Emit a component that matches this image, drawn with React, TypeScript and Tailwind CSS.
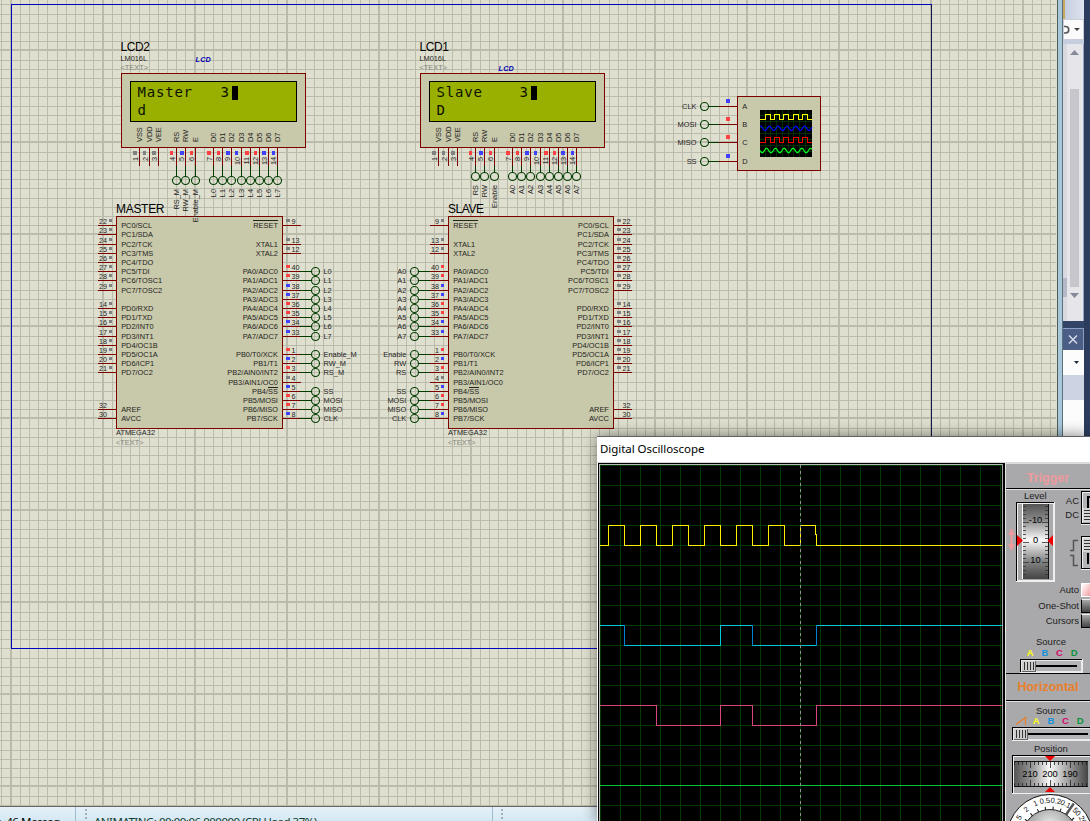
import React from "react";

const MAROON = "#7d0000";
const GREEN = "#003c00";
const BODY = "#c8c8aa";
const INK = "#24241e";
const LEVEL: Record<string, string> = { r: "#ff4040", b: "#4040ff", g: "#808080" };
const SANS = "'Liberation Sans', Arial, sans-serif";

type Anchor = "start" | "middle" | "end";

function Label({ x, y, size = 7.4, anchor = "start", fill = INK, width, children }: {
  x: number; y: number; size?: number; anchor?: Anchor; fill?: string; width?: number; children: string;
}) {
  return (
    <text x={x} y={y} fontFamily={SANS} fontSize={size} textAnchor={anchor} fill={fill} textLength={width}>
      {children}
    </text>
  );
}

function VLabel({ x, y, anchor = "start", children }: { x: number; y: number; anchor?: Anchor; children: string }) {
  return (
    <text transform={`translate(${x} ${y}) rotate(-90)`} fontFamily={SANS} fontSize={7.4} textAnchor={anchor} fill={INK}>
      {children}
    </text>
  );
}

const H = ({ x, y, w, c }: { x: number; y: number; w: number; c: string }) => (
  <rect x={x} y={y} width={w} height={1} fill={c} shapeRendering="crispEdges" />
);
const V = ({ x, y, h, c }: { x: number; y: number; h: number; c: string }) => (
  <rect x={x} y={y} width={1} height={h} fill={c} shapeRendering="crispEdges" />
);
const Terminal = ({ x, y }: { x: number; y: number }) => (
  <circle cx={x + 0.5} cy={y + 0.5} r={4} fill="none" stroke={GREEN} strokeWidth={1.1} />
);
const Box = ({ x, y, w, h, fill = BODY, stroke = MAROON }: { x: number; y: number; w: number; h: number; fill?: string; stroke?: string }) => (
  <rect x={x + 0.5} y={y + 0.5} width={w} height={h} fill={fill} stroke={stroke} shapeRendering="crispEdges" />
);
const Dot = ({ x, y, s, w = 4, h = 4 }: { x: number; y: number; s: string; w?: number; h?: number }) => (
  <rect x={x} y={y} width={w} height={h} fill={LEVEL[s]} shapeRendering="crispEdges" />
);

type Pin = [number, string, string, string, string?];

const PORT_CD: Pin[] = [
  [225, "22", "PC0/SCL", "g"], [234, "23", "PC1/SDA", "g"], [244, "24", "PC2/TCK", "g"], [253, "25", "PC3/TMS", "g"],
  [262, "26", "PC4/TDO", "g"], [271, "27", "PC5/TDI", "g"], [280, "28", "PC6/TOSC1", "g"], [290, "29", "PC7/TOSC2", "g"],
  [308, "14", "PD0/RXD", "g"], [317, "15", "PD1/TXD", "g"], [326, "16", "PD2/INT0", "g"], [336, "17", "PD3/INT1", "g"],
  [345, "18", "PD4/OC1B", "g"], [354, "19", "PD5/OC1A", "g"], [363, "20", "PD6/ICP1", "g"], [372, "21", "PD7/OC2", "g"],
  [409, "32", "AREF", ""], [418, "30", "AVCC", ""],
];

const portAB = (nets: string[]): Pin[] => [
  [225, "9", "RESET", "g"], [244, "13", "XTAL1", "g"], [253, "12", "XTAL2", "g"],
  [271, "40", "PA0/ADC0", "r", nets[0]], [280, "39", "PA1/ADC1", "r", nets[1]], [290, "38", "PA2/ADC2", "b", nets[2]],
  [299, "37", "PA3/ADC3", "b", nets[3]], [308, "36", "PA4/ADC4", "r", nets[4]], [317, "35", "PA5/ADC5", "r", nets[5]],
  [326, "34", "PA6/ADC6", "b", nets[6]], [336, "33", "PA7/ADC7", "b", nets[7]],
  [354, "1", "PB0/T0/XCK", "r", nets[8]], [363, "2", "PB1/T1", "b", nets[9]], [372, "3", "PB2/AIN0/INT2", "r", nets[10]],
  [382, "4", "PB3/AIN1/OC0", "g"], [391, "5", "PB4/SS", "b", "SS"], [400, "6", "PB5/MOSI", "r", "MOSI"],
  [409, "7", "PB6/MISO", "r", "MISO"], [418, "8", "PB7/SCK", "b", "CLK"],
];

function PinRow({ pin, edge, side }: { pin: Pin; edge: number; side: "left" | "right" }) {
  const [y, num, name, s, net] = pin;
  const left = side === "left";
  return (
    <g>
      <H x={left ? edge - 18 : edge + 1} y={y} w={18} c={MAROON} />
      {s && <Dot x={left ? edge - 7 : edge + 4} y={y - 6} s={s} w={left ? 3 : 4} h={3} />}
      <Label x={left ? edge - 9 : edge + 9.4} y={y - 1.3} size={7.2} anchor={left ? "end" : "start"}>{num}</Label>
      <Label x={left ? edge + 5.2 : edge - 4.1} y={y + 3} anchor={left ? "start" : "end"}>{name}</Label>
      {name === "RESET" && <H x={left ? edge + 5 : edge - 29} y={y - 5} w={25} c={INK} />}
      {name === "PB4/SS" && <H x={left ? edge + 21 : edge - 14} y={y - 4} w={10} c={INK} />}
      {net && (
        <>
          <H x={left ? edge - 29 : edge + 18} y={y} w={11} c={GREEN} />
          <Terminal x={left ? edge - 34 : edge + 33} y={y} />
          <Label x={left ? edge - 41.7 : edge + 41.5} y={y + 3} anchor={left ? "end" : "start"}>{net}</Label>
        </>
      )}
    </g>
  );
}

function Mcu({ x, w, name, nameWidth, nets, mirrored }: { x: number; w: number; name: string; nameWidth: number; nets: string[]; mirrored?: boolean }) {
  const cd = mirrored ? "right" : "left";
  const ab = mirrored ? "left" : "right";
  return (
    <g>
      <Box x={x} y={216} w={w} h={212} />
      <Label x={x} y={213} size={12} fill="#000" width={nameWidth}>{name}</Label>
      {PORT_CD.map((p) => <PinRow key={p[1]} pin={p} edge={mirrored ? x + w : x} side={cd} />)}
      {portAB(nets).map((p) => <PinRow key={p[1]} pin={p} edge={mirrored ? x : x + w} side={ab} />)}
      <Label x={x} y={435} width={39}>ATMEGA32</Label>
      <Label x={x} y={444.6} fill="#84847a" width={27.5}>{"<TEXT>"}</Label>
    </g>
  );
}

const LCD_PINS: [number, string, string][] = [
  [18, "VSS", "g"], [28, "VDD", "g"], [37, "VEE", "g"], [55, "RS", "r"], [64, "RW", "b"], [74, "E", "r"],
  [92, "D0", "r"], [101, "D1", "r"], [110, "D2", "b"], [120, "D3", "b"], [129, "D4", "r"], [138, "D5", "r"], [147, "D6", "b"], [156, "D7", "b"],
];

function Lcd({ x, name, tagX, tagY, line1, line2, circleY }: {
  x: number; name: string; tagX: number; tagY: number; line1: string; line2: string; circleY: number;
}) {
  const cells = (n: number) => Array.from({ length: n }, (_, i) => (x + 16.6 + i * 9.2).toFixed(1)).join(" ");
  const lcdFont = "'DejaVu Sans Mono', monospace";
  return (
    <g>
      <Label x={x - 0.5} y={50.8} size={12} fill="#000" width={29.5}>{name}</Label>
      <Label x={x - 0.5} y={60.8} width={26.5}>LM016L</Label>
      <Label x={x - 0.5} y={69.6} fill="#84847a" width={27.5}>{"<TEXT>"}</Label>
      <text x={tagX} y={tagY} fontFamily={SANS} fontSize={7.2} fontWeight={700} fontStyle="italic" fill="#0000b4" textLength={15.3}>LCD</text>
      <Box x={x} y={73} w={184} h={74} />
      <Box x={x + 9} y={81} w={166} h={40} fill="#99b000" stroke="#000" />
      <text x={cells(line1.length)} y={97} fontFamily={lcdFont} fontSize={14} fill="#0c1000" xmlSpace="preserve">{line1}</text>
      <text x={cells(1)} y={115} fontFamily={lcdFont} fontSize={14} fill="#0c1000">{line2}</text>
      <rect x={x + 111} y={86} width={6} height={14} fill="#000" shapeRendering="crispEdges" />
      {LCD_PINS.map(([dx, pn, s], i) => {
        const px = x + dx;
        return (
          <g key={pn}>
            <V x={px} y={148} h={18} c={MAROON} />
            <Dot x={px - (i > 2 && i % 3 ? 5 : 6)} y={151} s={s} w={i % 2 ? 3 : 4} />
            <VLabel x={px - 0.8} y={156.8} anchor="end">{String(i + 1)}</VLabel>
            <VLabel x={px + 3.3} y={142}>{pn}</VLabel>
            {i > 2 && (
              <>
                <V x={px} y={166} h={circleY - 170} c={GREEN} />
                <Terminal x={px} y={circleY} />
              </>
            )}
          </g>
        );
      })}
    </g>
  );
}

function LcdNets({ x, circleY, nets }: { x: number; circleY: number; nets: string[] }) {
  return (
    <g>
      {nets.map((net, i) => (
        <VLabel key={net} x={x + LCD_PINS[i + 3][0] + 2.8} y={circleY + 9} anchor="end">{net}</VLabel>
      ))}
    </g>
  );
}

function ScopePart() {
  const rows: [number, string, string, string][] = [[106, "CLK", "A", "b"], [124, "MOSI", "B", "r"], [142, "MISO", "C", "r"], [161, "SS", "D", "b"]];
  const square = (lo: number, hi: number) => {
    let d = `M760 ${lo}.5`;
    [765.5, 774.5, 783.5, 793.5, 802.5].forEach((u) => { d += `H${u}V${hi}.5H${u + 5}V${lo}.5`; });
    return d + "H812";
  };
  const wave = (y: number, off: number) =>
    "M" + Array.from({ length: 53 }, (_, i) => `${760 + i} ${(y + 2.3 * Math.sin(((i + off) / 8.8) * 2 * Math.PI)).toFixed(1)}`).join("L");
  return (
    <g>
      <Box x={737} y={96} w={83} h={74} />
      {rows.map(([y, net, port, s]) => (
        <g key={net}>
          <Label x={696.5} y={y + 3} anchor="end">{net}</Label>
          <Terminal x={704} y={y} />
          <H x={709} y={y} w={10} c={GREEN} />
          <H x={719} y={y} w={18} c={MAROON} />
          <Dot x={726} y={y - 7} s={s} />
          <Label x={742.3} y={y + 3}>{port}</Label>
        </g>
      ))}
      <rect x={760} y={110} width={52} height={47} fill="#000" />
      <path d="M765.5 110V157M770.5 110V157M776.5 110V157M782.5 110V157M788.5 110V157M793.5 110V157M799.5 110V157M805.5 110V157M760 115.5H812M760 121.5H812M760 127.5H812M760 133.5H812M760 139.5H812M760 145.5H812M760 151.5H812" stroke="#003000" shapeRendering="crispEdges" />
      <g fill="none" strokeWidth={1.2}>
        <path d={square(119, 114)} stroke="#ffff00" strokeWidth={1} shapeRendering="crispEdges" />
        <path d={wave(128.3, 6)} stroke="#0000ff" />
        <path d={square(142, 137)} stroke="#ff0000" strokeWidth={1} shapeRendering="crispEdges" />
        <path d={wave(150.5, 0)} stroke="#00ff20" />
      </g>
    </g>
  );
}

const MASTER_NETS = ["RS_M", "RW_M", "Enable_M", "L0", "L1", "L2", "L3", "L4", "L5", "L6", "L7"];
const SLAVE_NETS = ["RS", "RW", "Enable", "A0", "A1", "A2", "A3", "A4", "A5", "A6", "A7"];

function Schematic() {
  const lines: React.ReactElement[] = [];
  for (let k = -1; k < 114; k++) {
    const x = Math.floor(11 + 9.2 * k + 0.001);
    const major = k % 10 === 0;
    lines.push(<rect key={"v" + k} x={major ? x - 1 : x} y={0} width={major ? 2 : 1} height={806} />);
  }
  for (let k = -75; k < 13; k++) {
    const y = Math.floor(694.8 + 9.2 * k + 0.001);
    const major = k % 10 === 0;
    lines.push(<rect key={"h" + k} x={0} y={major ? y - 1 : y} width={1056} height={major ? 2 : 1} />);
  }
  return (
    <svg width={1057} height={806} className="block shrink-0 bg-[#dfdfcf]">
      <g fill="#bbbbac" shapeRendering="crispEdges">{lines}</g>
      <rect x={11.5} y={4.5} width={920} height={644} fill="none" stroke="#0000c0" shapeRendering="crispEdges" />
      <V x={931} y={5} h={643} c="#16164c" />
      <Lcd x={121} name="LCD2" tagX={195.5} tagY={61.8} line1="Master   3" line2="d" circleY={180} />
      <Lcd x={420} name="LCD1" tagX={498.5} tagY={70.8} line1="Slave    3" line2="D" circleY={176} />
      <Mcu x={116} w={166} name="MASTER" nameWidth={48.5} nets={["L0", "L1", "L2", "L3", "L4", "L5", "L6", "L7", "Enable_M", "RW_M", "RS_M"]} />
      <Mcu x={448} w={165} name="SLAVE" nameWidth={36} mirrored nets={["A0", "A1", "A2", "A3", "A4", "A5", "A6", "A7", "Enable", "RW", "RS"]} />
      <LcdNets x={121} circleY={180} nets={MASTER_NETS} />
      <LcdNets x={420} circleY={176} nets={SLAVE_NETS} />
      <ScopePart />
    </svg>
  );
}

function SidePanel() {
  return (
    <div className="flex grow bg-[#2b3c5c]">
      <div className="w-px bg-[#4e5c5c]" />
      <div className="w-1 bg-[#a8c8da]" />
      <div className="w-px bg-[#59727c]" />
      <div className="flex h-full w-[21px] flex-col">
        <div className="h-[19px] border-l-2 border-[#c9a75c] bg-linear-to-r from-[#c5cee0] to-[#dde3ee]" />
        <div className="flex h-[21px] items-center justify-between border border-[#c8cdd8] bg-[#fbfbfb] pr-[3px]">
          <svg width="6" height="10"><path d="M0 1.5H1.5A3 3 0 0 1 1.5 8H0" fill="none" stroke="#555" strokeWidth="1.6" /></svg>
          <svg width="6" height="4"><path d="M0 0H6L3 3Z" fill="#444" /></svg>
        </div>
        <div className="h-1 bg-[#c5cedf]" />
        <div className="flex h-[277px] border-r border-[#9aa3c0] bg-[#e6e5ea]">
          <div className="flex w-[4px] flex-col justify-end bg-[#d9d8de] pb-[24px]"><div className="h-[19px] bg-[#b6b8c8]" /></div>
          <div className="flex grow flex-col items-center pt-[6px] pr-px">
            <svg width="9" height="5"><path d="M0 5H9L4.5 0Z" fill="#868999" /></svg>
            <div className="mt-[34px] h-[198px] w-[9px] bg-[#c6c6cc]" />
            <svg className="mt-[6px]" width="9" height="5"><path d="M0 0H9L4.5 5Z" fill="#868999" /></svg>
          </div>
        </div>
        <div className="h-[7px] bg-[#334567]" />
        <div className="flex h-[22px] items-center justify-center border-t border-r border-[#8c9bc0] bg-[#4b5e85] pr-px">
          <svg width="10" height="9"><path d="M1 0.5L9 8.5M9 0.5L1 8.5" stroke="#d4dbe8" strokeWidth="1.5" /></svg>
        </div>
        <div className="flex h-[25px] items-center justify-end bg-[#fcfcfc] pr-[5px]"><svg width="5" height="3"><path d="M0 0H5L2.5 3Z" fill="#1b2940" /></svg></div>
        <div className="h-[25px] bg-[#ccd4e4]" />
        <div className="grow bg-[#fcfcfc]" />
      </div>
    </div>
  );
}

function Screen() {
  const cols = Array.from({ length: 21 }, (_, i) => i * 20);
  const rows = Array.from({ length: 18 }, (_, i) => i * 20);
  let clock = "M0 80.5";
  for (let i = 0; i < 6; i++) clock += `H${8.5 + i * 32}V60.5H${24.5 + i * 32}V80.5`;
  clock += "H200.5V60.5H215.5V69.5H216.5V80.5H402";
  return (
    <svg width="402" height="356" className="block bg-black" shapeRendering="crispEdges" fill="none">
      <path d={cols.map((x) => `M${x + 0.5} 0V357`).join("") + rows.map((y) => `M0 ${y + 0.5}H402`).join("")} stroke="#003c00" />
      <path d={clock} stroke="#fff200" />
      <path d="M0 160.5H24.5M24 180.5H120.5M120 160.5H152.5M152 180.5H216.5M216 160.5H402M120.5 160V181" stroke="#00c8d8" />
      <path d="M24.5 160V181M152.5 160V181M216.5 160V181" stroke="#0082d2" />
      <path d="M0 240.5H56.5V260.5H120.5V240.5H152.5V260.5H216.5V240.5H402" stroke="#d8447c" />
      <path d="M0 320.5H402" stroke="#00c83c" />
      <path d="M200.5 0V357" stroke="#909090" strokeDasharray="3 3" />
    </svg>
  );
}

function Channels() {
  return (
    <>
      <span className="w-[14.6px] text-[#ffff20]">A</span>
      <span className="w-[14.6px] text-[#1292dc]">B</span>
      <span className="w-[14.6px] text-[#d6086c]">C</span>
      <span className="w-[14.6px] text-[#08943c]">D</span>
    </>
  );
}

function Slider({ width }: { width: number }) {
  return (
    <svg width={width} height="14" className="block shrink-0" shapeRendering="crispEdges">
      <rect width={width} height="14" fill="#eee" />
      <rect width={width - 1} height="13" fill="#000" />
      <rect x="1" y="1" width={width - 2} height="12" fill="#e8e8e8" />
      <rect x="2" y="2" width={width - 4} height="10" fill="#b5b4b6" />
      <rect x="16" y="6" width={width - 22} height="2" fill="#000" />
      <rect x="2" y="2" width="14" height="11" fill="#666" />
      <rect x="2" y="2" width="13" height="10" fill="#ccc" />
      <path d="M4.5 3V11M7.5 3V11M10.5 3V11M13.5 3V11" stroke="#333" />
    </svg>
  );
}

function LevelDial() {
  return (
    <svg width="49" height="80" className="block overflow-visible">
      <defs>
        <linearGradient id="lv" x1="0" y1="0" x2="0" y2="1"><stop offset="0" stopColor="#555" /><stop offset=".2" stopColor="#858585" /><stop offset=".48" stopColor="#fafafa" /><stop offset=".75" stopColor="#888" /><stop offset="1" stopColor="#444" /></linearGradient>
      </defs>
      <path d="M4.5 26L8 33H5.5V42H8L4.500 49L1 42H3.5V33H1Z" fill="#ee9a9e" />
      <rect x="9" y="0" width="39" height="80" fill="#f0f0f0" />
      <rect x="9" y="0" width="38" height="79" fill="#000" />
      <rect x="10" y="1" width="37" height="78" fill="#eee" />
      <rect x="11" y="2" width="35" height="76" fill="#a9a9ab" />
      <rect x="15" y="2" width="1" height="75" fill="#fff" />
      <rect x="16" y="2" width="25" height="75" fill="url(#lv)" />
      <rect x="41" y="2" width="1" height="75" fill="#111" />
      <path d={Array.from({ length: 18 }, (_, i) => `M16 ${4.5 + i * 4}H${i % 5 === 4 ? 22 : 19}M41 ${4.5 + i * 4}H${i % 5 === 4 ? 35 : 38}`).join("")} stroke="#333" strokeWidth=".8" />
      <path d="M10 33L16 38.5L10 44ZM46 33L40.5 38.5L46 44Z" fill="#f00000" />
      <g fontFamily={SANS} fontSize="9.3" textAnchor="middle">
        <text x="28.5" y="21" fill="#000">-10</text>
        <text x="28.5" y="41" fill="#000">0</text>
        <text x="28.5" y="61" fill="#000">10</text>
      </g>
    </svg>
  );
}

function Toggle({ low }: { low?: boolean }) {
  return (
    <svg width="9" height="34" className="block" shapeRendering="crispEdges">
      <rect width="9" height="34" fill="#eee" />
      <rect width="9" height="33" fill="#000" />
      <rect x="1" y="1" width="8" height="31" fill="#eee" />
      <rect x="2" y="2" width="7" height="30" fill="#b5b4b6" />
      <path d={low ? "M6 17V5H9V6H7V17Z" : "M6 17V27H7V17Z"} fill="#000" stroke="#000" />
      <rect x="2" y={low ? 17 : 2} width="7" height="14" fill="#d6d6d6" />
      <path d={low ? "M3 19.5H9M3 22.5H9M3 25.5H9M3 28.5H9" : "M3 4.5H9M3 7.5H9M3 10.5H9M3 13.5H9"} stroke="#333" />
    </svg>
  );
}

function OptionRow({ text, lit }: { text: string; lit?: boolean }) {
  return (
    <div className="flex h-[15.7px] items-center justify-end gap-[2px]">
      <span>{text}</span>
      <div className={lit ? "h-[14px] w-[9px] border border-r-0 border-white bg-linear-to-br from-[#ffffff] to-[#f0a0a4]" : "h-[14px] w-[9px] border border-r-0 border-t-[#eee] border-b-black border-l-black bg-linear-to-b from-[#aaaaaa] to-[#444444]"} />
    </div>
  );
}

function PositionDial() {
  return (
    <svg width="78" height="39" className="block">
      <defs>
        <linearGradient id="pv"><stop offset="0" stopColor="#555" /><stop offset=".25" stopColor="#999" /><stop offset=".48" stopColor="#fafafa" /><stop offset=".75" stopColor="#999" /><stop offset="1" stopColor="#444" /></linearGradient>
      </defs>
      <rect width="78" height="39" fill="#f0f0f0" />
      <rect width="78" height="38" fill="#000" />
      <rect x="1" y="1" width="77" height="37" fill="#eee" />
      <rect x="2" y="2" width="76" height="36" fill="#a9a9ab" />
      <rect x="2" y="6" width="74" height="26" fill="#111" />
      <rect x="2" y="7" width="74" height="24" fill="url(#pv)" />
      <path d={Array.from({ length: 19 }, (_, i) => `M${2.5 + i * 4} 7V${i % 5 === 4 ? 13 : 10}M${2.5 + i * 4} 31V${i % 5 === 4 ? 25 : 28}`).join("")} stroke="#222" strokeWidth=".8" />
      <path d="M33 1H43L38 6ZM33 37H43L38 32Z" fill="#f00000" />
      <g fontFamily={SANS} fontSize="9.3" textAnchor="middle">
        <text x="18" y="22">210</text><text x="38" y="22">200</text><text x="58" y="22">190</text>
      </g>
    </svg>
  );
}

function TimebaseKnob() {
  const marks: [string, number][] = [["5", -57], ["2", -40], ["1", -23], ["0.5", -8], ["0.2", 9], ["0.1", 25], ["50", 46], ["20", 62]];
  return (
    <svg width="84" height="27" className="block shrink-0">
      <defs><radialGradient id="kn" cx=".5" cy=".3" r=".6"><stop offset="0" stopColor="#efefef" /><stop offset="1" stopColor="#7d7d7d" /></radialGradient></defs>
      <circle cx="44" cy="43.5" r="43" fill="#fff" stroke="#111" />
      {Array.from({ length: 12 }, (_, i) => (
        <path key={i} d="M44 12.5V16" stroke="#111" transform={`rotate(${-84 + i * 15} 44 43.5)`} />
      ))}
      <path d="M44 2V16" stroke="#555" strokeWidth="2.5" transform="rotate(35 44 43.5)" />
      <circle cx="44" cy="43.5" r="28" fill="url(#kn)" stroke="#222" />
      {marks.map(([t, a]) => (
        <text key={t} x="44" y="9" fontFamily={SANS} fontSize="7.5" textAnchor="middle" fill="#111" transform={`rotate(${a} 44 43.5)`}>{t}</text>
      ))}
    </svg>
  );
}

function Controls() {
  return (
    <div className="flex w-[85px] shrink-0 flex-col overflow-hidden border-l border-[#e8e8e8] bg-[#a9a9ab] text-[9.5px] leading-[10px] text-[#1c1c1c]">
      <div className="flex h-[26px] shrink-0 items-center justify-center border-t border-b border-t-[#dddddd] border-b-black pt-[3px] text-[12.5px] font-bold text-[#ee9a9e]">Trigger</div>
      <div className="flex h-[95px] shrink-0 justify-between border-t border-[#e0e0e0]">
        <div className="flex w-[50px] flex-col pt-px pl-px">
          <span className="ml-[17px] pb-px">Level</span>
          <LevelDial />
        </div>
        <div className="flex flex-col gap-[11px] pt-px">
          <div className="flex gap-[2px]"><div className="flex w-[14px] flex-col items-end gap-[4px] pt-[5px]"><span>AC</span><span>DC</span></div><Toggle low /></div>
          <div className="flex justify-end gap-[2px]">
            <svg width="10" height="34"><path d="M1 14.5H4.5V4.5H9M1 19.5H4.500V29.5H9" fill="none" stroke="#555" strokeWidth="1.500" /></svg>
            <Toggle />
          </div>
        </div>
      </div>
      <div className="-mt-[2px] flex h-[55px] shrink-0 flex-col">
        <OptionRow text="Auto" lit /><OptionRow text="One-Shot" /><OptionRow text="Cursors" />
      </div>
      <div className="flex h-[36px] shrink-0 flex-col">
        <span className="ml-[30px] h-[11px]">Source</span>
        <div className="ml-[17px] flex h-[11px] text-center font-bold"><Channels /></div>
        <div className="ml-[14px]"><Slider width={63} /></div>
      </div>
      <div className="flex h-[28px] shrink-0 items-center justify-center border-y border-black text-[12.5px] font-bold text-[#e9802c]">Horizontal</div>
      <div className="flex h-[120px] shrink-0 flex-col border-t border-[#e0e0e0] pt-[4px]">
        <span className="ml-[30px] h-[10px]">Source</span>
        <div className="flex h-[11px] pl-[9px] text-center font-bold">
          <svg width="14" height="9"><path d="M1 8.5L10.5 1.5V9" fill="none" stroke="#e9802c" strokeWidth="1.2" /></svg>
          <Channels />
        </div>
        <div className="ml-[6px]"><Slider width={82} /></div>
        <span className="mt-[2px] ml-[28px] h-[12px] pt-px">Position</span>
        <div className="ml-[6px]"><PositionDial /></div>
        <TimebaseKnob />
      </div>
    </div>
  );
}

function OscilloscopeWindow() {
  return (
    <section className="absolute top-[436px] left-[597px] flex h-[385px] w-[493px] flex-col border-t border-[#606060] bg-white shadow-[0_0_14px_rgba(0,0,0,0.5)]">
      <header className="flex h-[25px] shrink-0 items-center pb-[2px] pl-[3px] font-['Noto_Sans'] text-[11.5px] tracking-[-0.05px] text-black">
        <span>Digital Oscilloscope</span>
      </header>
      <div className="flex h-[359px] border-t border-[#d8d8d8] pl-px">
        <div className="flex w-[407px] shrink-0 border-t border-l border-black bg-black">
          <div className="h-[358px] w-[403px] shrink-0 border-t border-l border-[#b8b8b8] bg-black"><Screen /></div>
          <div className="w-px bg-[#a8a8a8]" />
        </div>
        <Controls />
      </div>
    </section>
  );
}

const Grip = () => (
  <svg width="3" height="12" className="mt-[2px]"><path d="M0 1H2M0 5H2M0 9H2" stroke="#a4b0b6" strokeWidth="2" /></svg>
);

function StatusBar() {
  return (
    <footer className="flex h-[15px] items-start overflow-hidden border-t border-[#686868] bg-linear-to-b from-[#e6f1f7] to-[#d4e8f3] font-['Noto_Sans'] text-[11.5px] leading-[16px] whitespace-nowrap text-black">
      <div className="h-full w-[76px] border-r border-[#9dbcd0] pt-[7px]"><span className="-ml-[4px] tracking-[-0.45px]">s, 46 Messag</span></div>
      <div className="w-[9px]" />
      <Grip />
      <span className="w-[404px] pt-[7px] pl-[6px] tracking-[-0.5px] text-[#103c30]">ANIMATING: 00:00:06.000000 (CPU load 37%)</span>
      <div className="h-full w-px bg-[#9dbcd0]" />
      <div className="w-[8px]" />
      <Grip />
    </footer>
  );
}

export default function App() {
  return (
    <main className="relative flex h-[821px] w-[1090px] flex-col overflow-hidden font-['Liberation_Sans',sans-serif]">
      <div className="flex h-[806px]">
        <Schematic />
        <div className="flex h-[437px] grow"><SidePanel /></div>
      </div>
      <StatusBar />
      <OscilloscopeWindow />
    </main>
  );
}
